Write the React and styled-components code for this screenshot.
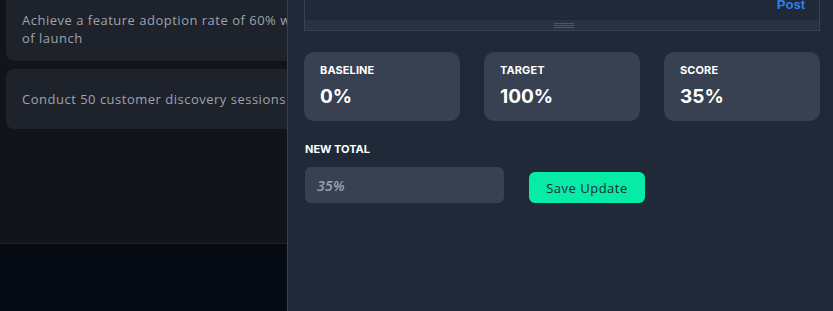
import styled, { createGlobalStyle } from "styled-components";

const GlobalStyle = createGlobalStyle`
  html, body {
    margin: 0;
    padding: 0;
    background: #050a13;
    overflow: hidden;
  }
  * { box-sizing: border-box; }
`;

const stats = [
  { label: "BASELINE", value: "0%" },
  { label: "TARGET", value: "100%" },
  { label: "SCORE", value: "35%" },
];

const goals = [
  { text: "Achieve a feature adoption rate of 60% within 30 days of launch", lines: 2 },
  { text: "Conduct 50 customer discovery sessions in Q3", lines: 1 },
];

const App = () => {
  return (
    <Page>
      <GlobalStyle />
      <LeftColumn>
        <GoalArea>
          <GoalList>
            {goals.map((g) => (
              <GoalCard key={g.text} $tall={g.lines > 1}>
                <GoalText>{g.text}</GoalText>
              </GoalCard>
            ))}
          </GoalList>
        </GoalArea>
        <BottomBar />
      </LeftColumn>

      <Drawer>
        <DrawerInner>
          <Editor>
            <EditorFooter>
              <PostButton>Post</PostButton>
            </EditorFooter>
            <ResizeStrip>
              <Grip>
                <GripLine />
                <GripLine />
                <GripLine />
              </Grip>
            </ResizeStrip>
          </Editor>

          <StatGrid>
            {stats.map((s) => (
              <StatCard key={s.label}>
                <StatLabel>{s.label}</StatLabel>
                <StatValue>{s.value}</StatValue>
              </StatCard>
            ))}
          </StatGrid>

          <FieldLabel>NEW TOTAL</FieldLabel>
          <UpdateRow>
            <TotalInput placeholder="35%" />
            <SaveButton>Save Update</SaveButton>
          </UpdateRow>
        </DrawerInner>
      </Drawer>
    </Page>
  );
};

const Page = styled.div`
  display: flex;
  width: 833px;
  height: 311px;
  overflow: hidden;
`;

const LeftColumn = styled.div`
  width: 287px;
  flex-shrink: 0;
  display: flex;
  flex-direction: column;
  overflow: hidden;
`;

const GoalArea = styled.div`
  height: 244px;
  background: #111419;
  border-bottom: 1px solid #1c212a;
  overflow: hidden;
  padding-left: 6px;
`;

const GoalList = styled.div`
  width: 560px;
  display: flex;
  flex-direction: column;
  gap: 8px;
  margin-top: -13px;
`;

const GoalCard = styled.div`
  background: #1e222a;
  border-radius: 8px;
  padding: ${(p) => (p.$tall ? "24px 16px 14px" : "21px 16px")};
  display: flex;
  align-items: center;
`;

const GoalText = styled.p`
  margin: 0;
  font-family: "Open Sans", "Liberation Sans", sans-serif;
  font-size: 13px;
  line-height: 18px;
  letter-spacing: 0.5px;
  color: #9ca3af;
  width: 362px;
`;

const BottomBar = styled.div`
  flex: 1;
  background: #050a13;
`;

const Drawer = styled.div`
  flex: 1;
  background: #1f2937;
  border-left: 1px solid #374151;
  overflow: hidden;
`;

const DrawerInner = styled.div`
  padding: 0 13px 0 16px;
  margin-top: -6px;
  display: flex;
  flex-direction: column;
`;

const Editor = styled.div`
  border: 1px solid #374151;
  border-top: none;
  background: #1f2937;
`;

const EditorFooter = styled.div`
  display: flex;
  justify-content: flex-end;
  align-items: flex-start;
  padding: 3px 14px 0 0;
  height: 26px;
`;

const PostButton = styled.span`
  font-family: "Liberation Sans", Arial, sans-serif;
  font-weight: 700;
  font-size: 13px;
  line-height: 16px;
  color: #2f80ed;
`;

const ResizeStrip = styled.div`
  height: 10px;
  background: #283241;
  display: flex;
  justify-content: center;
  align-items: center;
`;

const Grip = styled.div`
  display: flex;
  flex-direction: column;
  gap: 1px;
  margin-left: 3px;
`;

const GripLine = styled.div`
  width: 20px;
  height: 1px;
  background: #4b5563;
`;

const StatGrid = styled.div`
  display: grid;
  grid-template-columns: repeat(3, 1fr);
  gap: 24px;
  margin-top: 21px;
`;

const StatCard = styled.div`
  background: #374151;
  border-radius: 10px;
  height: 69px;
  padding: 11px 16px;
`;

const StatLabel = styled.div`
  font-family: Inter, "Liberation Sans", sans-serif;
  font-weight: 700;
  font-size: 11px;
  line-height: 14px;
  color: #ffffff;
  letter-spacing: 0.1px;
`;

const StatValue = styled.div`
  font-family: Inter, "Liberation Sans", sans-serif;
  font-weight: 700;
  font-size: 19px;
  line-height: 24px;
  color: #ffffff;
  margin-top: 8px;
`;

const FieldLabel = styled.div`
  font-family: Inter, "Liberation Sans", sans-serif;
  font-weight: 700;
  font-size: 11px;
  line-height: 14px;
  color: #ffffff;
  margin-top: 21px;
  padding-left: 1px;
`;

const UpdateRow = styled.div`
  display: flex;
  align-items: flex-end;
  gap: 25px;
  margin-top: 11px;
  padding-left: 1px;
`;

const TotalInput = styled.input`
  width: 199px;
  height: 36px;
  border: none;
  border-radius: 6px;
  background: #374151;
  padding: 0 12px;
  font-family: "Open Sans", "Liberation Sans", sans-serif;
  font-style: italic;
  font-weight: 600;
  font-size: 14px;
  letter-spacing: 0.3px;
  color: #e5e7eb;
  outline: none;

  &::placeholder {
    color: #9ca3af;
  }
`;

const SaveButton = styled.button`
  width: 116px;
  height: 31px;
  border: none;
  border-radius: 6px;
  background: #06eba6;
  color: #1f2937;
  font-family: "Open Sans", "Liberation Sans", sans-serif;
  font-size: 13px;
  letter-spacing: 0.5px;
  cursor: pointer;
  padding: 0;
`;

export default App;
